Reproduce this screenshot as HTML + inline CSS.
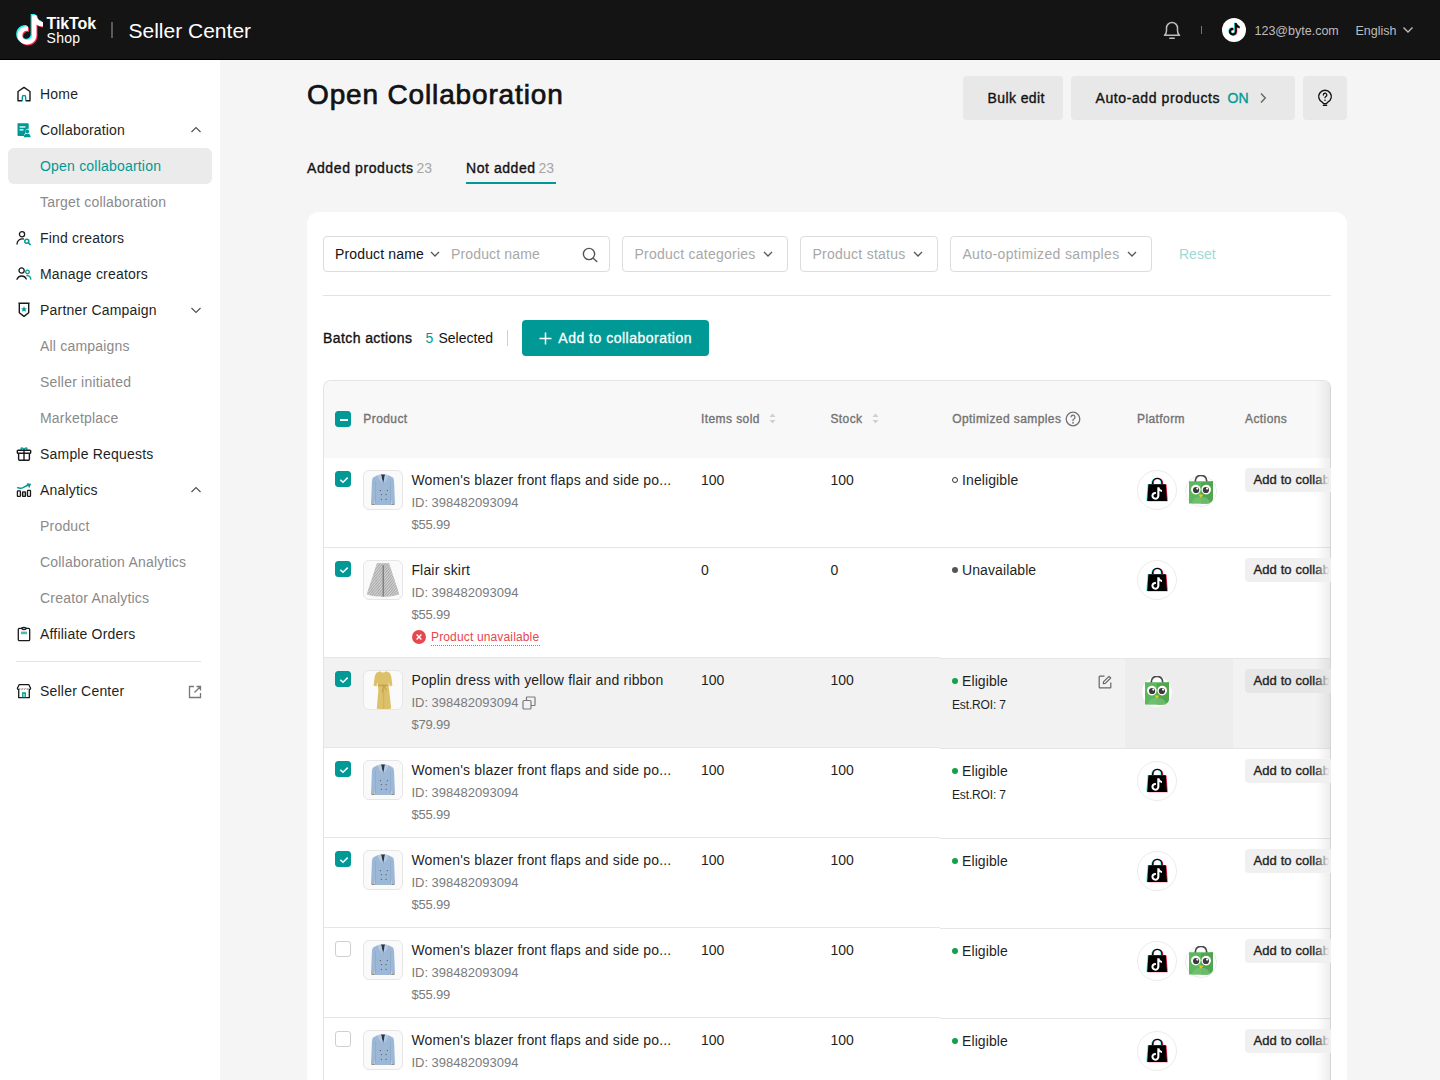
<!DOCTYPE html>
<html><head><meta charset="utf-8">
<style>
*{box-sizing:border-box;margin:0;padding:0}
html,body{width:1440px;height:1080px;overflow:hidden;background:#f5f5f5;font-family:"Liberation Sans",sans-serif;color:#121212}
.abs{position:absolute}
#hdr{position:absolute;left:0;top:0;width:1440px;height:60px;background:#141414;border-bottom:1px solid #000}
#side{position:absolute;left:0;top:60px;width:220px;height:1020px;background:#fff}
.nav{position:absolute;left:8px;width:204px;height:36px;border-radius:6px}
.nav .ic{position:absolute;left:8px;top:10px;width:16px;height:16px}
.nav .t{position:absolute;left:32px;top:0;line-height:36px;font-size:14px;color:#1f1f1f;white-space:nowrap;letter-spacing:0.2px}
.nav.sub .t{color:#8a8a8a}
.nav.sel{background:#ebebeb}
.nav.sel .t{color:#009995}
.nav .chev{position:absolute;left:182px;top:13px;width:12px;height:10px}
#main{position:absolute;left:220px;top:61px;width:1220px;height:1019px;background:#f5f5f5}
.tx{position:absolute;line-height:1;white-space:nowrap}
.btn{position:absolute;height:44px;background:#e8e8e8;border-radius:4px}
.inp{position:absolute;top:236px;height:36px;border:1px solid #dcdcdc;border-radius:4px;background:#fff}
.cb{position:absolute;width:16px;height:16px;border-radius:3px;border:1px solid #cfcfcf;background:#fff}
.cb.on{background:#009995;border-color:#009995}
.thumb{position:absolute;left:363px;width:40px;height:40px;border:1px solid #e6e6e6;border-radius:6px;background:#fafafa;overflow:hidden}
</style></head><body>
<div id="hdr">
  <svg class="abs" style="left:13px;top:14px" width="30" height="32" viewBox="0 0 30 32">
    <g transform="translate(1,0)">
    <path d="M18 1 h4.5 c0.5 4 3 6.5 6.5 7 v4.5 c-2.5 0 -4.8 -0.8 -6.5 -2 v10.5 c0 5.5 -4.5 9.5 -9.5 9.5 c-5.2 0 -9.5 -4 -9.5 -9.2 c0 -5.5 4.8 -9.8 10.5 -9 v4.6 c-2.8 -0.8 -5.7 1.2 -5.7 4.3 c0 2.6 2.1 4.6 4.7 4.6 c2.7 0 5 -2.1 5 -4.8 z" fill="#25f4ee" transform="translate(-1.3,-1.1)"/>
    <path d="M18 1 h4.5 c0.5 4 3 6.5 6.5 7 v4.5 c-2.5 0 -4.8 -0.8 -6.5 -2 v10.5 c0 5.5 -4.5 9.5 -9.5 9.5 c-5.2 0 -9.5 -4 -9.5 -9.2 c0 -5.5 4.8 -9.8 10.5 -9 v4.6 c-2.8 -0.8 -5.7 1.2 -5.7 4.3 c0 2.6 2.1 4.6 4.7 4.6 c2.7 0 5 -2.1 5 -4.8 z" fill="#fe2c55" transform="translate(1,1)"/>
    <path d="M18 1 h4.5 c0.5 4 3 6.5 6.5 7 v4.5 c-2.5 0 -4.8 -0.8 -6.5 -2 v10.5 c0 5.5 -4.5 9.5 -9.5 9.5 c-5.2 0 -9.5 -4 -9.5 -9.2 c0 -5.5 4.8 -9.8 10.5 -9 v4.6 c-2.8 -0.8 -5.7 1.2 -5.7 4.3 c0 2.6 2.1 4.6 4.7 4.6 c2.7 0 5 -2.1 5 -4.8 z" fill="#fff"/>
    </g>
  </svg>
  <div class="tx" style="left:46.5px;top:16.2px;font-size:16px;font-weight:bold;color:#fff;letter-spacing:-0.1px">TikTok</div>
  <div class="tx" style="left:46.5px;top:31px;font-size:14px;color:#fff;letter-spacing:0.3px">Shop</div>
  <div class="abs" style="left:111px;top:22px;width:2px;height:16px;background:#5a5a5a"></div>
  <div class="tx" style="left:128.5px;top:19.7px;font-size:21px;color:#fff">Seller Center</div>

  <svg class="abs" style="left:1163px;top:20px" width="18" height="20" viewBox="0 0 18 20" fill="none" stroke="#bdbdbd" stroke-width="1.5" stroke-linejoin="round"><path d="M1.5 15.3c1.3-1.2 2-2.6 2-4.6V8a5.5 5.5 0 0 1 11 0v2.7c0 2 0.7 3.4 2 4.6z"/><path d="M6.8 18.3h4.4" stroke-linecap="round"/></svg>
  <div class="abs" style="left:1201px;top:26px;width:1px;height:8px;background:#777"></div>
  <svg class="abs" style="left:1222px;top:18px" width="24" height="24" viewBox="0 0 24 24"><circle cx="12" cy="12" r="12" fill="#fff"/>
    <g transform="translate(5.2,4.6) scale(0.5)">
    <path d="M15 1h4c0.4 3.3 2.5 5.4 5.4 5.8v3.8c-2 0-3.9-0.6-5.4-1.6v8.6c0 4.5-3.7 7.8-7.8 7.8c-4.3 0-7.8-3.3-7.8-7.6c0-4.5 3.9-8 8.6-7.4v3.8c-2.3-0.6-4.7 1-4.7 3.5c0 2.1 1.7 3.8 3.9 3.8c2.2 0 4.1-1.7 4.1-3.9z" fill="#25f4ee" transform="translate(-1.4,-1.2)"/>
    <path d="M15 1h4c0.4 3.3 2.5 5.4 5.4 5.8v3.8c-2 0-3.9-0.6-5.4-1.6v8.6c0 4.5-3.7 7.8-7.8 7.8c-4.3 0-7.8-3.3-7.8-7.6c0-4.5 3.9-8 8.6-7.4v3.8c-2.3-0.6-4.7 1-4.7 3.5c0 2.1 1.7 3.8 3.9 3.8c2.2 0 4.1-1.7 4.1-3.9z" fill="#fe2c55" transform="translate(1.2,1.2)"/>
    <path d="M15 1h4c0.4 3.3 2.5 5.4 5.4 5.8v3.8c-2 0-3.9-0.6-5.4-1.6v8.6c0 4.5-3.7 7.8-7.8 7.8c-4.3 0-7.8-3.3-7.8-7.6c0-4.5 3.9-8 8.6-7.4v3.8c-2.3-0.6-4.7 1-4.7 3.5c0 2.1 1.7 3.8 3.9 3.8c2.2 0 4.1-1.7 4.1-3.9z" fill="#000"/>
    </g></svg>
  <div class="abs" style="left:1254.5px;top:23px;font-size:12.5px;color:#bdbdbd;line-height:16px;letter-spacing:0px;white-space:nowrap">123@byte.com</div>
  <div class="abs" style="left:1355.5px;top:23px;font-size:12.5px;color:#bdbdbd;line-height:16px;white-space:nowrap">English</div>
  <svg class="abs" style="left:1402px;top:26px" width="12" height="8" viewBox="0 0 12 8" fill="none" stroke="#bdbdbd" stroke-width="1.4"><path d="M1.5 1.5L6 6L10.5 1.5"/></svg>
</div>
<div id="side">
<div class="nav" style="top:16px"><svg class="ic" viewBox="0 0 16 16" fill="none" stroke-width="1.4" stroke-linejoin="round"><path d="M6.3 14.8H2V5.5L8 1.4l6 4.1v9.3H9.7" stroke="#1a1a1a"/><path d="M6.3 14.8V11.2a1.7 1.7 0 0 1 3.4 0v3.6" stroke="#009995"/></svg><span class="t">Home</span></div>
<div class="nav" style="top:52px"><svg class="ic" viewBox="0 0 16 16"><path d="M1.5 1.3h10.2a1 1 0 0 1 1 1v4.6a3 3 0 0 0-3.2 4.4l-1.3 1v1.8H2.5a1 1 0 0 1-1-1z" fill="#009995"/><rect x="3.6" y="4.3" width="5.8" height="1.3" fill="#fff"/><rect x="3.6" y="7.2" width="3.8" height="1.3" fill="#fff"/><circle cx="11.2" cy="9.4" r="1.9" fill="#009995"/><path d="M7.8 15.2a3.4 3.4 0 0 1 6.8 0z" fill="#009995"/></svg><span class="t">Collaboration</span><svg class="chev" viewBox="0 0 12 10" fill="none" stroke="#555" stroke-width="1.2"><path d="M1.5 7L6 2.5L10.5 7"/></svg></div>
<div class="nav sub sel" style="top:88px"><span class="t">Open collaboartion</span></div>
<div class="nav sub" style="top:124px"><span class="t">Target collaboration</span></div>
<div class="nav" style="top:160px"><svg class="ic" viewBox="0 0 16 16" fill="none" stroke-width="1.3"><circle cx="6" cy="4.3" r="2.6" stroke="#1a1a1a"/><path d="M1 14a5.3 5.3 0 0 1 6.3-5" stroke="#1a1a1a" stroke-linecap="round"/><circle cx="10.8" cy="11.3" r="2" stroke="#009995" stroke-width="1.5"/><path d="M12.3 12.8l2 1.8" stroke="#009995" stroke-width="1.5" stroke-linecap="round"/></svg><span class="t">Find creators</span></div>
<div class="nav" style="top:196px"><svg class="ic" viewBox="0 0 16 16" fill="none" stroke-width="1.3"><circle cx="5.6" cy="4.5" r="2.6" stroke="#1a1a1a"/><path d="M1 13.3a5 5 0 0 1 9.3-0.3" stroke="#1a1a1a" stroke-linecap="round"/><circle cx="11.5" cy="6" r="1.8" stroke="#009995"/><path d="M10.8 9.6a3.6 3.6 0 0 1 4 3.6" stroke="#009995" stroke-linecap="round"/></svg><span class="t">Manage creators</span></div>
<div class="nav" style="top:232px"><svg class="ic" viewBox="0 0 16 16" fill="none"><path d="M2.4 1.3h11.2 M3.3 1.5v9.2l4.7 3.7l4.7-3.7V1.5" stroke="#1a1a1a" stroke-width="1.4" stroke-linejoin="round"/><path d="M8 4.3l0.9 1.9l2 0.2l-1.5 1.4l0.4 2l-1.8-1l-1.8 1l0.4-2l-1.5-1.4l2-0.2z" fill="#009995"/></svg><span class="t">Partner Campaign</span><svg class="chev" viewBox="0 0 12 10" fill="none" stroke="#555" stroke-width="1.2"><path d="M1.5 3L6 7.5L10.5 3"/></svg></div>
<div class="nav sub" style="top:268px"><span class="t">All campaigns</span></div>
<div class="nav sub" style="top:304px"><span class="t">Seller initiated</span></div>
<div class="nav sub" style="top:340px"><span class="t">Marketplace</span></div>
<div class="nav" style="top:376px"><svg class="ic" viewBox="0 0 16 16" fill="none" stroke-width="1.4"><path d="M5.3 3.8C4.5 1.6 6.5 1.2 8 3.6C9.5 1.2 11.5 1.6 10.7 3.8" stroke="#009995"/><rect x="1.3" y="4.2" width="13.4" height="3" rx="0.8" stroke="#1a1a1a"/><path d="M2.6 7.3v5.6a1.4 1.4 0 0 0 1.4 1.4h8a1.4 1.4 0 0 0 1.4-1.4V7.3 M8 4.3v10" stroke="#1a1a1a"/></svg><span class="t">Sample Requests</span></div>
<div class="nav" style="top:412px"><svg class="ic" viewBox="0 0 16 16" fill="none" stroke-width="1.3"><rect x="1.4" y="8.8" width="3" height="5.6" rx="0.6" stroke="#1a1a1a"/><rect x="6.5" y="9.8" width="3" height="4.6" rx="0.6" stroke="#1a1a1a" fill="#bbb"/><rect x="11.5" y="8.3" width="3" height="6.1" rx="0.6" stroke="#1a1a1a"/><path d="M1.2 5.3c2 1.3 4 1.3 6.3 0c2-1.2 3.6-2 5.9-2.4" stroke="#009995" stroke-width="1.5"/><path d="M10.8 1.9l3.2 0.5l-1 3" stroke="#009995" stroke-width="1.5"/></svg><span class="t">Analytics</span><svg class="chev" viewBox="0 0 12 10" fill="none" stroke="#555" stroke-width="1.2"><path d="M1.5 7L6 2.5L10.5 7"/></svg></div>
<div class="nav sub" style="top:448px"><span class="t">Product</span></div>
<div class="nav sub" style="top:484px"><span class="t">Collaboration Analytics</span></div>
<div class="nav sub" style="top:520px"><span class="t">Creator Analytics</span></div>
<div class="nav" style="top:556px"><svg class="ic" viewBox="0 0 16 16" fill="none" stroke-width="1.3"><rect x="2.3" y="2.3" width="11.4" height="12.4" rx="1.2" stroke="#1a1a1a"/><ellipse cx="8" cy="2.4" rx="2.2" ry="1.1" stroke="#1a1a1a" fill="#fff"/><rect x="5" y="5.6" width="6" height="2.6" fill="#4cb8b3" stroke="none"/></svg><span class="t">Affiliate Orders</span></div>
<div class="abs" style="left:16px;top:601px;width:185px;height:1px;background:#e3e3e3"></div>
<div class="nav" style="top:613px"><svg class="ic" viewBox="0 0 16 16" fill="none" stroke-width="1.3"><path d="M3.1 1.7h9.8l1.7 3.6a1.8 1.8 0 0 1-1.3 1.4v8H2.7v-8a1.8 1.8 0 0 1-1.3-1.4z" stroke="#1a1a1a" stroke-linejoin="round"/><path d="M1.6 5.5c1 1 1.8 1 2.7 0c1 1 1.8 1 2.7 0c1 1 1.8 1 2.7 0c1 1 1.8 1 2.7 0c1 1 1.5 1 2 0" stroke="#1a1a1a" stroke-width="0.8" stroke-dasharray="1 0.8"/><path d="M6.8 14.6v-4.6h2.4v4.6" stroke="#009995" stroke-width="1.4"/></svg><span class="t">Seller Center</span><svg class="abs" style="left:180px;top:12px" width="14" height="14" viewBox="0 0 14 14" fill="none" stroke="#777" stroke-width="1.3"><path d="M6 1.5H1.5v11h11V8 M8.5 1.5h4v4 M12.5 1.5L6.5 7.5"/></svg></div>
</div>
<div id="main"></div>
<svg width="0" height="0" style="position:absolute">
<defs>
<symbol id="blazer" viewBox="0 0 40 40">
 <path d="M14.5 5.3L18 4.6h4l3.5 0.7l4.4 2.2c0.8 1 1 2.5 1.2 4.5l0.9 22.3h-3.2l-0.3-4.5l-0.2 5.1h-16.6l-0.2-5.1l-0.3 4.5h-3.2l0.9-22.3c0.2-2 0.4-3.5 1.2-4.5z" fill="#9db7d6"/>
 <path d="M18 4.6h4l-1.8 9.5z" fill="#2e3440"/>
 <path d="M14.5 5.3L18 4.6L20.2 14L16 9.5z M25.5 5.3L22 4.6L20.2 14L24 9.5z" fill="#b4c9e2"/>
 <path d="M12.5 11v23 M27.5 11v23" stroke="#8aa5c6" stroke-width="0.6"/>
 <circle cx="17.4" cy="20.6" r="0.6" fill="#555"/><circle cx="24.3" cy="20.6" r="0.6" fill="#555"/>
 <circle cx="18.4" cy="24.6" r="0.6" fill="#555"/><circle cx="23.1" cy="24.6" r="0.6" fill="#555"/>
 <circle cx="18.4" cy="29.3" r="0.6" fill="#555"/><circle cx="23.1" cy="29.3" r="0.6" fill="#555"/>
 <path d="M8.6 34h3.1v1h-3.1z M28.3 34h3.1v1h-3.1z" fill="#a08a6c"/>
</symbol>
<symbol id="skirt" viewBox="0 0 40 40">
 <path d="M14 3.2L26 3.2L36.2 34.3C33 35.4 30 35.9 27 36.3C24 36.8 16 36.8 13 36.3C10 35.9 7 35.4 3.8 34.3Z" fill="#a8a8a8"/>
 <path d="M14 3.2L26 3.2L36.2 34.3C33 35.4 30 35.9 27 36.3C24 36.8 16 36.8 13 36.3C10 35.9 7 35.4 3.8 34.3Z" fill="url(#chk)"/>
 <path d="M20.2 5v31.5" stroke="#6e6e6e" stroke-width="1.1"/>
</symbol>
<pattern id="chk" width="2" height="2" patternUnits="userSpaceOnUse" patternTransform="rotate(40)"><rect width="1" height="2" fill="#d4d4d4"/></pattern>
<symbol id="dress" viewBox="0 0 40 40">
 <path d="M17 1.3C18.5 2.9 21.5 2.9 23 1.3L26.6 2.8L28.2 6L29.4 15.6L26.8 16.4L25.8 12.2L25.4 15.5L26.2 20L28.2 38.6C24 39.6 17 39.6 13.8 38.6L15.4 20L15 15.5L14.4 12.2L13.4 16.4L10.6 15.6L11.8 6L13.4 2.8Z" fill="#dcc06a"/>
 <path d="M14.8 14.6h10.6v1.6h-10.6z" fill="#c8a74a"/>
 <path d="M20.5 15.5l-1 7 M21 15.5l2.5 5" stroke="#b9973e" stroke-width="0.9"/>
 <path d="M20.6 17v22" stroke="#c9ab52" stroke-width="0.7"/>
</symbol>
<symbol id="ttbag" viewBox="0 0 40 40">
 <path d="M15.6 14.5V13a4.65 4.65 0 0 1 9.3 0v1.5" fill="none" stroke="#25f4ee" stroke-width="1.3" transform="translate(-0.7,0)"/>
 <path d="M15.6 14.5V13a4.65 4.65 0 0 1 9.3 0v1.5" fill="none" stroke="#fe2c55" stroke-width="1.3" transform="translate(0.7,0)"/>
 <path d="M15.6 14.5V13a4.65 4.65 0 0 1 9.3 0v1.5" fill="none" stroke="#000" stroke-width="1.2"/>
 <path d="M11.4 14.2h17.4l1.2 16.8h-19.8z" fill="#25f4ee" transform="translate(-0.8,-0.3)"/>
 <path d="M11.4 14.2h17.4l1.2 16.8h-19.8z" fill="#fe2c55" transform="translate(0.8,0.3)"/>
 <path d="M11.4 14.2h17.4l1.2 16.8h-19.8z" fill="#000"/>
 <path d="M20.3 17.2h2.1c0.2 1.6 1.2 2.5 2.6 2.7v2c-1 0-1.9-0.3-2.6-0.8v4.6c0 2.3-1.9 4-4 4c-2.2 0-4-1.7-4-3.9c0-2.4 2.1-4.2 4.5-3.8v2.1c-1.2-0.3-2.4 0.5-2.4 1.7c0 1.1 0.9 1.9 1.9 1.9c1.1 0 1.9-0.9 1.9-2z" fill="#fff"/>
</symbol>
<symbol id="toko" viewBox="0 0 32 32">
 <circle cx="16" cy="16" r="15.5" fill="#fff" stroke="#ececec"/>
 <path d="M10.3 7V6a5.7 5.7 0 0 1 11.4 0V7" fill="none" stroke="#4a4a4a" stroke-width="1.7"/>
 <path d="M4 6.2h24v16.5a5.8 5.8 0 0 1-5.8 5.8H4z" fill="#5cb85c"/>
 <path d="M16 7.5l12-1.3v16.5a5.8 5.8 0 0 1-5.8 5.8H16z" fill="#4fa64f"/>
 <path d="M7 28.5a9 7 0 0 1 18 0z" fill="#78c278" opacity="0.7"/>
 <circle cx="10.8" cy="14.6" r="4.8" fill="#fff"/><circle cx="21.2" cy="14.6" r="4.8" fill="#fff"/>
 <circle cx="11.1" cy="15" r="3.1" fill="#3a3a3a"/><circle cx="20.9" cy="15" r="3.1" fill="#3a3a3a"/>
 <circle cx="12.3" cy="13.6" r="1.1" fill="#fff"/><circle cx="22.1" cy="13.6" r="1.1" fill="#fff"/>
 <path d="M13.6 19.6h4.8l-2.4 3.2z" fill="#f5c518"/>
</symbol>
</defs></svg>
<div class="tx" style="left:307px;top:80.5px;font-size:28px;color:#121212;font-weight:normal;letter-spacing:0.85px;-webkit-text-stroke:0.7px #121212">Open Collaboration</div>
<div class="btn" style="left:963px;top:76px;width:100px"></div>
<div class="tx" style="left:987.5px;top:91.4px;font-size:14px;color:#121212;font-weight:normal;letter-spacing:0.41px;-webkit-text-stroke:0.35px #121212">Bulk edit</div>
<div class="btn" style="left:1071px;top:76px;width:224px"></div>
<div class="tx" style="left:1095.5px;top:91.4px;font-size:14px;color:#121212;font-weight:normal;letter-spacing:0.6px;-webkit-text-stroke:0.35px #121212">Auto-add products</div>
<div class="tx" style="left:1227.5px;top:91.4px;font-size:14px;color:#009995;font-weight:normal;letter-spacing:0px;-webkit-text-stroke:0.35px #009995">ON</div>
<svg class="abs" style="left:1259px;top:92px" width="8" height="12" viewBox="0 0 8 12" fill="none" stroke="#666" stroke-width="1.4"><path d="M2 1.5L6.3 6L2 10.5"/></svg>
<div class="btn" style="left:1303px;top:76px;width:44px"></div>
<svg class="abs" style="left:1316px;top:89px" width="18" height="19" viewBox="0 0 18 19" fill="none" stroke="#121212" stroke-width="1.4"><path d="M6.5 13.4A6.3 6.3 0 1 1 11.5 13.4L10.3 14.8H7.7Z" stroke-linejoin="round"/><path d="M7.4 16.4H10.6" stroke-linecap="round"/><path d="M7.3 6a1.75 1.75 0 1 1 2.6 1.5c-0.55 0.3-0.9 0.6-0.9 1.2" stroke-width="1.3" stroke-linecap="round"/><circle cx="9" cy="11.3" r="0.8" fill="#121212" stroke="none"/></svg>
<div class="tx" style="left:307px;top:161.1px;font-size:14px;color:#121212;font-weight:normal;letter-spacing:0.61px;-webkit-text-stroke:0.35px #121212">Added products</div>
<div class="tx" style="left:416.5px;top:161.1px;font-size:14px;color:#a6a6a6;font-weight:normal;">23</div>
<div class="tx" style="left:466px;top:161.1px;font-size:14px;color:#121212;font-weight:normal;letter-spacing:0.55px;-webkit-text-stroke:0.35px #121212">Not added</div>
<div class="tx" style="left:538.5px;top:161.1px;font-size:14px;color:#a6a6a6;font-weight:normal;">23</div>
<div class="abs" style="left:466px;top:182px;width:90px;height:2px;background:#009995"></div>
<div class="abs" style="left:307px;top:212px;width:1040px;height:900px;background:#fff;border-radius:12px"></div>
<div class="inp" style="left:323px;width:287px"></div>
<div class="tx" style="left:335px;top:247.3px;font-size:14px;color:#121212;font-weight:normal;letter-spacing:0.15px">Product name</div>
<svg class="abs" style="left:430px;top:250px" width="10" height="8" viewBox="0 0 10 8" fill="none" stroke="#555" stroke-width="1.3"><path d="M1 2L5 6L9 2"/></svg>
<div class="tx" style="left:451px;top:247.3px;font-size:14px;color:#a8a8a8;font-weight:normal;letter-spacing:0.15px">Product name</div>
<svg class="abs" style="left:582px;top:247px" width="16" height="16" viewBox="0 0 16 16" fill="none" stroke="#555" stroke-width="1.4"><circle cx="7" cy="7" r="5.6"/><path d="M11.2 11.2L14.8 14.6" stroke-linecap="round"/></svg>
<div class="inp" style="left:622px;width:166px"></div>
<div class="tx" style="left:634.4px;top:247.3px;font-size:14px;color:#a8a8a8;font-weight:normal;letter-spacing:0.25px">Product categories</div>
<svg class="abs" style="left:763px;top:250px" width="10" height="8" viewBox="0 0 10 8" fill="none" stroke="#555" stroke-width="1.3"><path d="M1 2L5 6L9 2"/></svg>
<div class="inp" style="left:800px;width:138px"></div>
<div class="tx" style="left:812.5px;top:247.3px;font-size:14px;color:#a8a8a8;font-weight:normal;letter-spacing:0.25px">Product status</div>
<svg class="abs" style="left:913px;top:250px" width="10" height="8" viewBox="0 0 10 8" fill="none" stroke="#555" stroke-width="1.3"><path d="M1 2L5 6L9 2"/></svg>
<div class="inp" style="left:950px;width:202px"></div>
<div class="tx" style="left:962.4px;top:247.3px;font-size:14px;color:#a8a8a8;font-weight:normal;letter-spacing:0.35px">Auto-optimized samples</div>
<svg class="abs" style="left:1127px;top:250px" width="10" height="8" viewBox="0 0 10 8" fill="none" stroke="#555" stroke-width="1.3"><path d="M1 2L5 6L9 2"/></svg>
<div class="tx" style="left:1179px;top:247.3px;font-size:14px;color:#9fd9d6;font-weight:normal;">Reset</div>
<div class="abs" style="left:323px;top:295px;width:1008px;height:1px;background:#e3e3e3"></div>
<div class="tx" style="left:323px;top:331.1px;font-size:14px;color:#121212;font-weight:normal;letter-spacing:0.41px;-webkit-text-stroke:0.35px #121212">Batch actions</div>
<div class="tx" style="left:425.5px;top:331.1px;font-size:14px;color:#009995;font-weight:normal;">5</div>
<div class="tx" style="left:438.5px;top:331.1px;font-size:14px;color:#121212;font-weight:normal;">Selected</div>
<div class="abs" style="left:507px;top:330px;width:1px;height:16px;background:#d0d0d0"></div>
<div class="abs" style="left:522px;top:320px;width:187px;height:36px;background:#009995;border-radius:4px"></div>
<svg class="abs" style="left:539px;top:332px" width="13" height="13" viewBox="0 0 13 13" stroke="#fff" stroke-width="1.5"><path d="M6.5 0.5v12 M0.5 6.5h12"/></svg>
<div class="tx" style="left:558.3px;top:331.1px;font-size:14px;color:#fff;font-weight:normal;letter-spacing:0.5px;-webkit-text-stroke:0.3px #fff">Add to collaboration</div>
<div class="abs" style="left:323px;top:380px;width:1008px;height:720px;border:1px solid #e3e3e3;border-right:1px solid #d6d6d6;border-radius:8px 8px 0 0;overflow:hidden;background:#fff">
<div class="abs" style="left:0;top:0;width:1100px;height:77px;background:#f8f8f8"></div>
<div class="abs" style="left:0;top:77px;width:616px;height:90px;background:#fff;border-bottom:1px solid #e6e6e6"></div>
<div class="abs" style="left:616px;top:77px;width:600px;height:90px;background:#fff;border-bottom:1px solid #e6e6e6"></div>
<div class="abs" style="left:0;top:167px;width:616px;height:110px;background:#fff;border-bottom:1px solid #e6e6e6"></div>
<div class="abs" style="left:616px;top:167px;width:600px;height:111px;background:#fff;border-bottom:1px solid #e6e6e6"></div>
<div class="abs" style="left:0;top:277px;width:616px;height:90px;background:#f2f2f2;border-bottom:1px solid #e6e6e6"></div>
<div class="abs" style="left:616px;top:278px;width:600px;height:90px;background:#f2f2f2;border-bottom:1px solid #e6e6e6"></div>
<div class="abs" style="left:801px;top:278px;width:108px;height:89px;background:#ededed"></div>
<div class="abs" style="left:0;top:367px;width:616px;height:90px;background:#fff;border-bottom:1px solid #e6e6e6"></div>
<div class="abs" style="left:616px;top:368px;width:600px;height:90px;background:#fff;border-bottom:1px solid #e6e6e6"></div>
<div class="abs" style="left:0;top:457px;width:616px;height:90px;background:#fff;border-bottom:1px solid #e6e6e6"></div>
<div class="abs" style="left:616px;top:458px;width:600px;height:90px;background:#fff;border-bottom:1px solid #e6e6e6"></div>
<div class="abs" style="left:0;top:547px;width:616px;height:90px;background:#fff;border-bottom:1px solid #e6e6e6"></div>
<div class="abs" style="left:616px;top:548px;width:600px;height:90px;background:#fff;border-bottom:1px solid #e6e6e6"></div>
<div class="abs" style="left:0;top:637px;width:616px;height:90px;background:#fff;border-bottom:1px solid #e6e6e6"></div>
<div class="abs" style="left:616px;top:638px;width:600px;height:90px;background:#fff;border-bottom:1px solid #e6e6e6"></div>
<div class="abs" style="right:0;top:0;width:14px;height:720px;background:linear-gradient(to right,rgba(0,0,0,0),rgba(0,0,0,0.065))"></div>
</div>
<div class="cb on" style="left:335px;top:411px"><div style="position:absolute;left:4px;top:7px;width:8px;height:2px;background:#fff"></div></div>
<div class="tx" style="left:363.3px;top:412.8px;font-size:12px;color:#737373;font-weight:normal;letter-spacing:0.42px;-webkit-text-stroke:0.35px #737373">Product</div>
<div class="tx" style="left:701px;top:412.8px;font-size:12px;color:#737373;font-weight:normal;letter-spacing:0.42px;-webkit-text-stroke:0.35px #737373">Items sold</div>
<svg class="abs" style="left:768.5px;top:413px" width="7" height="11" viewBox="0 0 7 11" fill="#cfcfcf"><path d="M3.5 0.5L6.5 4H0.5z M3.5 10.5L6.5 7H0.5z"/></svg>
<div class="tx" style="left:830.4px;top:412.8px;font-size:12px;color:#737373;font-weight:normal;letter-spacing:0.42px;-webkit-text-stroke:0.35px #737373">Stock</div>
<svg class="abs" style="left:871.5px;top:413px" width="7" height="11" viewBox="0 0 7 11" fill="#cfcfcf"><path d="M3.5 0.5L6.5 4H0.5z M3.5 10.5L6.5 7H0.5z"/></svg>
<div class="tx" style="left:952.2px;top:412.8px;font-size:12px;color:#737373;font-weight:normal;letter-spacing:0.42px;-webkit-text-stroke:0.35px #737373">Optimized samples</div>
<svg class="abs" style="left:1065px;top:411px" width="16" height="16" viewBox="0 0 16 16" fill="none" stroke="#737373" stroke-width="1.3"><circle cx="8" cy="8" r="6.8"/><path d="M6 6.2a2 2 0 1 1 2.9 1.8c-0.6 0.3-0.9 0.7-0.9 1.3v0.6" /><circle cx="8" cy="11.8" r="0.3" fill="#737373"/></svg>
<div class="tx" style="left:1137px;top:412.8px;font-size:12px;color:#737373;font-weight:normal;letter-spacing:0.42px;-webkit-text-stroke:0.35px #737373">Platform</div>
<div class="tx" style="left:1245px;top:412.8px;font-size:12px;color:#737373;font-weight:normal;letter-spacing:0.42px;-webkit-text-stroke:0.35px #737373">Actions</div>
<div class="cb on" style="left:335px;top:471px"><svg style="position:absolute;left:3px;top:4px" width="10" height="8" viewBox="0 0 10 8" fill="none" stroke="#fff" stroke-width="1.5"><path d="M1.3 3.8L4 6.3L8.7 1.6"/></svg></div>
<div class="thumb" style="top:470px"><svg width="40" height="40" style="position:absolute;left:-1px;top:-1px"><use href="#blazer"/></svg></div>
<div class="tx" style="left:411.4px;top:473.1px;font-size:14px;color:#1f1f1f;font-weight:normal;letter-spacing:0.17px">Women's blazer front flaps and side po...</div>
<div class="tx" style="left:411.4px;top:496.1px;font-size:13px;color:#7a7a7a;font-weight:normal;">ID: 398482093094</div>
<div class="tx" style="left:411.4px;top:517.7px;font-size:13px;color:#7a7a7a;font-weight:normal;letter-spacing:-0.2px">$55.99</div>
<div class="tx" style="left:701px;top:473.1px;font-size:14px;color:#1f1f1f;font-weight:normal;">100</div>
<div class="tx" style="left:830.4px;top:473.1px;font-size:14px;color:#1f1f1f;font-weight:normal;">100</div>
<div class="abs" style="left:952px;top:477px;width:6px;height:6px;border-radius:50%;border:1px solid #333"></div>
<div class="tx" style="left:962px;top:473.1px;font-size:14px;color:#1f1f1f;font-weight:normal;letter-spacing:0.1px">Ineligible</div>
<div class="abs" style="left:1137px;top:470px;width:40px;height:40px;border-radius:50%;border:1px solid #ececec;background:#fff"></div>
<svg class="abs" style="left:1137px;top:470px" width="40" height="40"><use href="#ttbag"/></svg>
<svg class="abs" style="left:1185px;top:475px" width="32" height="32"><use href="#toko"/></svg>
<div class="abs" style="left:1245px;top:468px;width:86px;height:24px;background:#f0f0f0;border-radius:4px 0 0 4px;overflow:hidden"><div class="tx" style="left:8.5px;top:5.2px;font-size:13px;color:#1f1f1f;letter-spacing:0.1px;-webkit-text-stroke:0.35px #1f1f1f">Add to collab</div><div style="position:absolute;right:0;top:0;width:16px;height:24px;background:linear-gradient(to right,rgba(240,240,240,0),#f0f0f0 90%)"></div></div>
<div class="cb on" style="left:335px;top:561px"><svg style="position:absolute;left:3px;top:4px" width="10" height="8" viewBox="0 0 10 8" fill="none" stroke="#fff" stroke-width="1.5"><path d="M1.3 3.8L4 6.3L8.7 1.6"/></svg></div>
<div class="thumb" style="top:560px"><svg width="40" height="40" style="position:absolute;left:-1px;top:-1px"><use href="#skirt"/></svg></div>
<div class="tx" style="left:411.4px;top:563.1px;font-size:14px;color:#1f1f1f;font-weight:normal;letter-spacing:0.17px">Flair skirt</div>
<div class="tx" style="left:411.4px;top:586.1px;font-size:13px;color:#7a7a7a;font-weight:normal;">ID: 398482093094</div>
<div class="tx" style="left:411.4px;top:607.7px;font-size:13px;color:#7a7a7a;font-weight:normal;letter-spacing:-0.2px">$55.99</div>
<svg class="abs" style="left:412px;top:630px" width="14" height="14" viewBox="0 0 14 14"><circle cx="7" cy="7" r="7" fill="#e5484d"/><path d="M4.6 4.6l4.8 4.8 M9.4 4.6l-4.8 4.8" stroke="#fff" stroke-width="1.4"/></svg>
<div class="tx" style="left:431px;top:631.4px;font-size:12px;color:#e5484d;font-weight:normal;letter-spacing:0.15px">Product unavailable</div>
<div class="abs" style="left:431px;top:645px;width:109px;height:0;border-top:1px dotted #8c8c8c"></div>
<div class="tx" style="left:701px;top:563.1px;font-size:14px;color:#1f1f1f;font-weight:normal;">0</div>
<div class="tx" style="left:830.4px;top:563.1px;font-size:14px;color:#1f1f1f;font-weight:normal;">0</div>
<div class="abs" style="left:952px;top:567px;width:6px;height:6px;border-radius:50%;background:#555"></div>
<div class="tx" style="left:962px;top:563.1px;font-size:14px;color:#1f1f1f;font-weight:normal;letter-spacing:0.1px">Unavailable</div>
<div class="abs" style="left:1137px;top:560px;width:40px;height:40px;border-radius:50%;border:1px solid #ececec;background:#fff"></div>
<svg class="abs" style="left:1137px;top:560px" width="40" height="40"><use href="#ttbag"/></svg>
<div class="abs" style="left:1245px;top:558px;width:86px;height:24px;background:#f0f0f0;border-radius:4px 0 0 4px;overflow:hidden"><div class="tx" style="left:8.5px;top:5.2px;font-size:13px;color:#1f1f1f;letter-spacing:0.1px;-webkit-text-stroke:0.35px #1f1f1f">Add to collab</div><div style="position:absolute;right:0;top:0;width:16px;height:24px;background:linear-gradient(to right,rgba(240,240,240,0),#f0f0f0 90%)"></div></div>
<div class="cb on" style="left:335px;top:671px"><svg style="position:absolute;left:3px;top:4px" width="10" height="8" viewBox="0 0 10 8" fill="none" stroke="#fff" stroke-width="1.5"><path d="M1.3 3.8L4 6.3L8.7 1.6"/></svg></div>
<div class="thumb" style="top:670px"><svg width="40" height="40" style="position:absolute;left:-1px;top:-1px"><use href="#dress"/></svg></div>
<div class="tx" style="left:411.4px;top:673.1px;font-size:14px;color:#1f1f1f;font-weight:normal;letter-spacing:0.17px">Poplin dress with yellow flair and ribbon</div>
<div class="tx" style="left:411.4px;top:696.1px;font-size:13px;color:#7a7a7a;font-weight:normal;">ID: 398482093094</div>
<svg class="abs" style="left:522px;top:696px" width="14" height="14" viewBox="0 0 14 14" fill="none" stroke="#7a7a7a" stroke-width="1.2"><rect x="1" y="4.5" width="8" height="8.5" rx="1"/><path d="M4.5 4.5V1.5a0.5 0.5 0 0 1 0.5-0.5h7.5a0.5 0.5 0 0 1 0.5 0.5v7.5a0.5 0.5 0 0 1-0.5 0.5h-3.5"/></svg>
<div class="tx" style="left:411.4px;top:717.7px;font-size:13px;color:#7a7a7a;font-weight:normal;letter-spacing:-0.2px">$79.99</div>
<div class="tx" style="left:701px;top:673.1px;font-size:14px;color:#1f1f1f;font-weight:normal;">100</div>
<div class="tx" style="left:830.4px;top:673.1px;font-size:14px;color:#1f1f1f;font-weight:normal;">100</div>
<div class="abs" style="left:952px;top:678px;width:6px;height:6px;border-radius:50%;background:#14a04c"></div>
<div class="tx" style="left:962px;top:674.1px;font-size:14px;color:#1f1f1f;font-weight:normal;letter-spacing:0.1px">Eligible</div>
<div class="tx" style="left:952px;top:699.0px;font-size:12px;color:#1f1f1f;font-weight:normal;letter-spacing:-0.15px">Est.ROI: 7</div>
<svg class="abs" style="left:1098px;top:675px" width="14" height="14" viewBox="0 0 14 14" fill="none" stroke="#666" stroke-width="1.2"><path d="M6.5 1.2H1.8a0.6 0.6 0 0 0-0.6 0.6v10.4a0.6 0.6 0 0 0 0.6 0.6h10.4a0.6 0.6 0 0 0 0.6-0.6V7.5"/><path d="M11 1.3l1.7 1.7L7.3 8.4L5.3 8.7L5.6 6.7z" stroke-linejoin="round"/></svg>
<svg class="abs" style="left:1141px;top:676px" width="32" height="32"><use href="#toko"/></svg>
<div class="abs" style="left:1245px;top:669px;width:86px;height:24px;background:#e6e6e6;border-radius:4px 0 0 4px;overflow:hidden"><div class="tx" style="left:8.5px;top:5.2px;font-size:13px;color:#1f1f1f;letter-spacing:0.1px;-webkit-text-stroke:0.35px #1f1f1f">Add to collab</div><div style="position:absolute;right:0;top:0;width:16px;height:24px;background:linear-gradient(to right,rgba(240,240,240,0),#e6e6e6 90%)"></div></div>
<div class="cb on" style="left:335px;top:761px"><svg style="position:absolute;left:3px;top:4px" width="10" height="8" viewBox="0 0 10 8" fill="none" stroke="#fff" stroke-width="1.5"><path d="M1.3 3.8L4 6.3L8.7 1.6"/></svg></div>
<div class="thumb" style="top:760px"><svg width="40" height="40" style="position:absolute;left:-1px;top:-1px"><use href="#blazer"/></svg></div>
<div class="tx" style="left:411.4px;top:763.1px;font-size:14px;color:#1f1f1f;font-weight:normal;letter-spacing:0.17px">Women's blazer front flaps and side po...</div>
<div class="tx" style="left:411.4px;top:786.1px;font-size:13px;color:#7a7a7a;font-weight:normal;">ID: 398482093094</div>
<div class="tx" style="left:411.4px;top:807.7px;font-size:13px;color:#7a7a7a;font-weight:normal;letter-spacing:-0.2px">$55.99</div>
<div class="tx" style="left:701px;top:763.1px;font-size:14px;color:#1f1f1f;font-weight:normal;">100</div>
<div class="tx" style="left:830.4px;top:763.1px;font-size:14px;color:#1f1f1f;font-weight:normal;">100</div>
<div class="abs" style="left:952px;top:768px;width:6px;height:6px;border-radius:50%;background:#14a04c"></div>
<div class="tx" style="left:962px;top:764.1px;font-size:14px;color:#1f1f1f;font-weight:normal;letter-spacing:0.1px">Eligible</div>
<div class="tx" style="left:952px;top:789.0px;font-size:12px;color:#1f1f1f;font-weight:normal;letter-spacing:-0.15px">Est.ROI: 7</div>
<div class="abs" style="left:1137px;top:761px;width:40px;height:40px;border-radius:50%;border:1px solid #ececec;background:#fff"></div>
<svg class="abs" style="left:1137px;top:761px" width="40" height="40"><use href="#ttbag"/></svg>
<div class="abs" style="left:1245px;top:759px;width:86px;height:24px;background:#f0f0f0;border-radius:4px 0 0 4px;overflow:hidden"><div class="tx" style="left:8.5px;top:5.2px;font-size:13px;color:#1f1f1f;letter-spacing:0.1px;-webkit-text-stroke:0.35px #1f1f1f">Add to collab</div><div style="position:absolute;right:0;top:0;width:16px;height:24px;background:linear-gradient(to right,rgba(240,240,240,0),#f0f0f0 90%)"></div></div>
<div class="cb on" style="left:335px;top:851px"><svg style="position:absolute;left:3px;top:4px" width="10" height="8" viewBox="0 0 10 8" fill="none" stroke="#fff" stroke-width="1.5"><path d="M1.3 3.8L4 6.3L8.7 1.6"/></svg></div>
<div class="thumb" style="top:850px"><svg width="40" height="40" style="position:absolute;left:-1px;top:-1px"><use href="#blazer"/></svg></div>
<div class="tx" style="left:411.4px;top:853.1px;font-size:14px;color:#1f1f1f;font-weight:normal;letter-spacing:0.17px">Women's blazer front flaps and side po...</div>
<div class="tx" style="left:411.4px;top:876.1px;font-size:13px;color:#7a7a7a;font-weight:normal;">ID: 398482093094</div>
<div class="tx" style="left:411.4px;top:897.7px;font-size:13px;color:#7a7a7a;font-weight:normal;letter-spacing:-0.2px">$55.99</div>
<div class="tx" style="left:701px;top:853.1px;font-size:14px;color:#1f1f1f;font-weight:normal;">100</div>
<div class="tx" style="left:830.4px;top:853.1px;font-size:14px;color:#1f1f1f;font-weight:normal;">100</div>
<div class="abs" style="left:952px;top:858px;width:6px;height:6px;border-radius:50%;background:#14a04c"></div>
<div class="tx" style="left:962px;top:854.1px;font-size:14px;color:#1f1f1f;font-weight:normal;letter-spacing:0.1px">Eligible</div>
<div class="abs" style="left:1137px;top:851px;width:40px;height:40px;border-radius:50%;border:1px solid #ececec;background:#fff"></div>
<svg class="abs" style="left:1137px;top:851px" width="40" height="40"><use href="#ttbag"/></svg>
<div class="abs" style="left:1245px;top:849px;width:86px;height:24px;background:#f0f0f0;border-radius:4px 0 0 4px;overflow:hidden"><div class="tx" style="left:8.5px;top:5.2px;font-size:13px;color:#1f1f1f;letter-spacing:0.1px;-webkit-text-stroke:0.35px #1f1f1f">Add to collab</div><div style="position:absolute;right:0;top:0;width:16px;height:24px;background:linear-gradient(to right,rgba(240,240,240,0),#f0f0f0 90%)"></div></div>
<div class="cb" style="left:335px;top:941px"></div>
<div class="thumb" style="top:940px"><svg width="40" height="40" style="position:absolute;left:-1px;top:-1px"><use href="#blazer"/></svg></div>
<div class="tx" style="left:411.4px;top:943.1px;font-size:14px;color:#1f1f1f;font-weight:normal;letter-spacing:0.17px">Women's blazer front flaps and side po...</div>
<div class="tx" style="left:411.4px;top:966.1px;font-size:13px;color:#7a7a7a;font-weight:normal;">ID: 398482093094</div>
<div class="tx" style="left:411.4px;top:987.7px;font-size:13px;color:#7a7a7a;font-weight:normal;letter-spacing:-0.2px">$55.99</div>
<div class="tx" style="left:701px;top:943.1px;font-size:14px;color:#1f1f1f;font-weight:normal;">100</div>
<div class="tx" style="left:830.4px;top:943.1px;font-size:14px;color:#1f1f1f;font-weight:normal;">100</div>
<div class="abs" style="left:952px;top:948px;width:6px;height:6px;border-radius:50%;background:#14a04c"></div>
<div class="tx" style="left:962px;top:944.1px;font-size:14px;color:#1f1f1f;font-weight:normal;letter-spacing:0.1px">Eligible</div>
<div class="abs" style="left:1137px;top:941px;width:40px;height:40px;border-radius:50%;border:1px solid #ececec;background:#fff"></div>
<svg class="abs" style="left:1137px;top:941px" width="40" height="40"><use href="#ttbag"/></svg>
<svg class="abs" style="left:1185px;top:946px" width="32" height="32"><use href="#toko"/></svg>
<div class="abs" style="left:1245px;top:939px;width:86px;height:24px;background:#f0f0f0;border-radius:4px 0 0 4px;overflow:hidden"><div class="tx" style="left:8.5px;top:5.2px;font-size:13px;color:#1f1f1f;letter-spacing:0.1px;-webkit-text-stroke:0.35px #1f1f1f">Add to collab</div><div style="position:absolute;right:0;top:0;width:16px;height:24px;background:linear-gradient(to right,rgba(240,240,240,0),#f0f0f0 90%)"></div></div>
<div class="cb" style="left:335px;top:1031px"></div>
<div class="thumb" style="top:1030px"><svg width="40" height="40" style="position:absolute;left:-1px;top:-1px"><use href="#blazer"/></svg></div>
<div class="tx" style="left:411.4px;top:1033.1px;font-size:14px;color:#1f1f1f;font-weight:normal;letter-spacing:0.17px">Women's blazer front flaps and side po...</div>
<div class="tx" style="left:411.4px;top:1056.1px;font-size:13px;color:#7a7a7a;font-weight:normal;">ID: 398482093094</div>
<div class="tx" style="left:411.4px;top:1077.7px;font-size:13px;color:#7a7a7a;font-weight:normal;letter-spacing:-0.2px">$55.99</div>
<div class="tx" style="left:701px;top:1033.1px;font-size:14px;color:#1f1f1f;font-weight:normal;">100</div>
<div class="tx" style="left:830.4px;top:1033.1px;font-size:14px;color:#1f1f1f;font-weight:normal;">100</div>
<div class="abs" style="left:952px;top:1038px;width:6px;height:6px;border-radius:50%;background:#14a04c"></div>
<div class="tx" style="left:962px;top:1034.1px;font-size:14px;color:#1f1f1f;font-weight:normal;letter-spacing:0.1px">Eligible</div>
<div class="abs" style="left:1137px;top:1031px;width:40px;height:40px;border-radius:50%;border:1px solid #ececec;background:#fff"></div>
<svg class="abs" style="left:1137px;top:1031px" width="40" height="40"><use href="#ttbag"/></svg>
<div class="abs" style="left:1245px;top:1029px;width:86px;height:24px;background:#f0f0f0;border-radius:4px 0 0 4px;overflow:hidden"><div class="tx" style="left:8.5px;top:5.2px;font-size:13px;color:#1f1f1f;letter-spacing:0.1px;-webkit-text-stroke:0.35px #1f1f1f">Add to collab</div><div style="position:absolute;right:0;top:0;width:16px;height:24px;background:linear-gradient(to right,rgba(240,240,240,0),#f0f0f0 90%)"></div></div>
</body></html>
